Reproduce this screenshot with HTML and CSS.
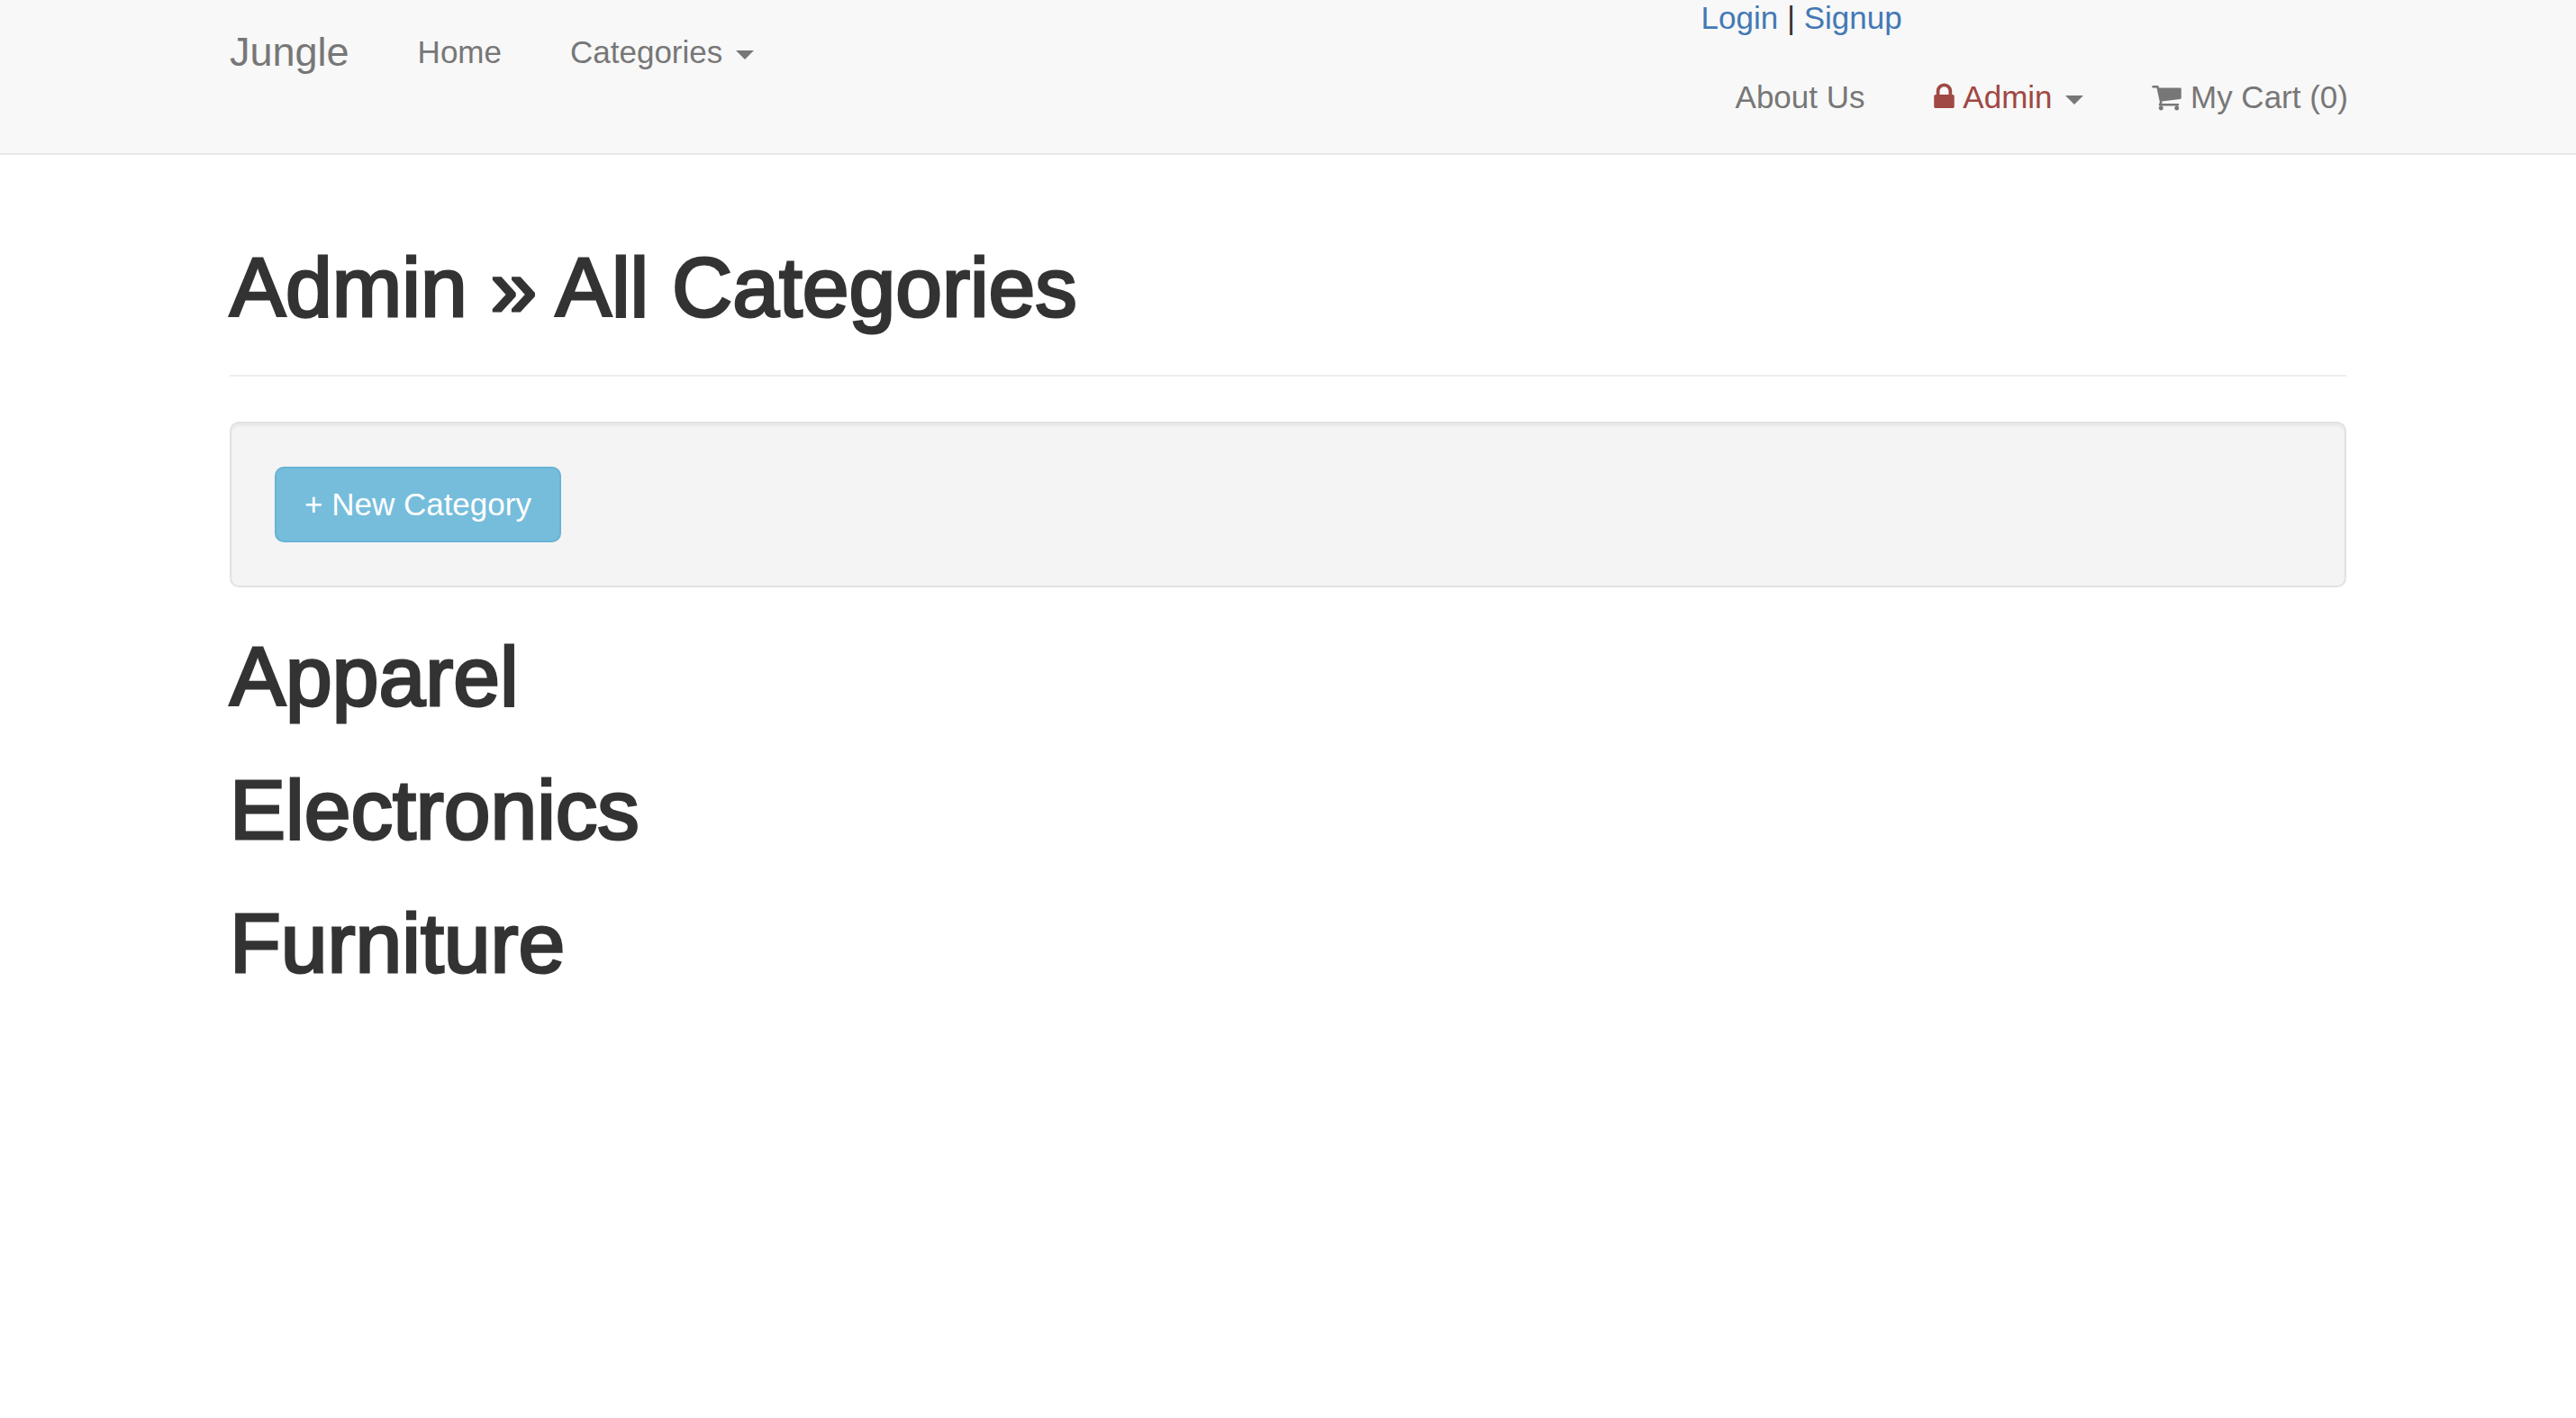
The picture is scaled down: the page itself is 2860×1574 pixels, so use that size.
FILE: index.html
```html
<!DOCTYPE html>
<html lang="en">
<head>
<meta charset="utf-8">
<meta name="viewport" content="width=device-width, initial-scale=1">
<title>Jungle</title>
<link rel="stylesheet" href="styles.css">
</head>
<body>
<header class="navbar">
  <div class="container navbar-inner">
    <nav class="nav nav-left" aria-label="Main">
      <a class="brand" href="#">Jungle</a>
      <a class="nav-link" href="#">Home</a>
      <button class="nav-link" type="button" aria-haspopup="true">Categories <span class="caret"></span></button>
    </nav>
    <div class="navbar-right">
      <div class="session"><a href="#">Login</a> | <a href="#">Signup</a></div>
      <nav class="nav nav-account" aria-label="Account">
        <a class="nav-link" href="#">About Us</a>
        <button class="nav-link" type="button" aria-haspopup="true"><span class="danger"><svg class="icon icon-lock" viewBox="0 -1536 1152 1792" aria-hidden="true"><path transform="scale(1,-1)" d="M320 768h512v192q0 106-75 181t-181 75-181-75-75-181v-192zM1152 672v-576q0-40-28-68t-68-28h-960q-40 0-68 28t-28 68v576q0 40 28 68t68 28h32v192q0 184 132 316t316 132 316-132 132-316v-192h32q40 0 68-28t28-68z"/></svg> Admin</span> <span class="caret"></span></button>
        <a class="nav-link" href="#"><svg class="icon icon-cart" viewBox="0 -1536 1664 1792" aria-hidden="true"><path transform="scale(1,-1)" d="M640 0q0-52-38-90t-90-38-90 38-38 90 38 90 90 38 90-38 38-90zM1536 0q0-52-38-90t-90-38-90 38-38 90 38 90 90 38 90-38 38-90zM1664 1088v-512q0-24-16.500-42.500t-40.500-21.500l-1044-122q13-60 13-70 0-16-24-64h920q26 0 45-19t19-45-19-45-45-19h-1024q-26 0-45 19t-19 45q0 11 8 31.500t16 36 21.500 40 15.500 29.500l-177 823h-204q-26 0-45 19t-19 45 19 45 45 19h256q16 0 28.500-6.500t19.500-15.500 13-24.500 8-26 5.500-29.500 4.500-26h1201q26 0 45-19t19-45z"/></svg> My Cart (0)</a>
      </nav>
    </div>
  </div>
</header>
<main class="container">
  <header class="page-header">
    <h1>Admin » All Categories</h1>
  </header>
  <div class="well">
    <a class="btn" href="#">+ New Category</a>
  </div>
  <section class="categories">
    <h1>Apparel</h1>
    <h1>Electronics</h1>
    <h1>Furniture</h1>
  </section>
</main>
</body>
</html>
```
FILE: styles.css
```css
* {
  box-sizing: border-box;
}

body {
  margin: 0;
  background: #fff;
  color: #333;
  font-family: "Helvetica Neue", "Liberation Sans", Arial, sans-serif;
  font-size: 35px;
  line-height: 50px;
}

a {
  color: #4479b5;
  text-decoration: none;
}

.container {
  max-width: 2426px;
  margin: 0 auto;
  padding: 0 38px;
}

.navbar {
  background: #f8f8f8;
  border-bottom: 2px solid #e7e7e7;
}

.navbar-inner {
  display: flex;
  justify-content: space-between;
  align-items: flex-start;
}

.nav {
  display: flex;
  align-items: center;
}

.nav-left {
  height: 116px;
  margin-left: -38px;
}

.nav-account {
  height: 130px;
  padding-top: 6px;
}

.navbar-right {
  margin-right: -40px;
}

.session {
  line-height: 40px;
}

.brand,
.nav-link {
  padding: 0 38px;
  border: 0;
  background: none;
  color: #777;
  font: inherit;
  white-space: nowrap;
}

.brand {
  font-size: 45px;
}

.danger {
  color: #9f4844;
}

.caret {
  display: inline-block;
  margin-left: 5px;
  vertical-align: middle;
  border-top: 10px solid;
  border-right: 10px solid transparent;
  border-left: 10px solid transparent;
}

.icon {
  height: 35px;
  vertical-align: -5px;
  fill: currentColor;
}

.icon-lock {
  width: 23px;
  margin-right: 2px;
}

.icon-cart {
  width: 33px;
}

h1 {
  margin: 0;
  font-size: 93px;
  font-weight: 400;
  line-height: 98px;
  -webkit-text-stroke: 3px currentColor;
}

.page-header {
  margin: 98px 0 50px;
  padding-bottom: 48px;
  border-bottom: 2px solid #eee;
}

.well {
  margin-bottom: 50px;
  padding: 48px;
  border: 2px solid #e2e2e2;
  border-radius: 10px;
  background: #f4f4f4;
  box-shadow: inset 0 3px 3px rgba(0, 0, 0, 0.05);
}

.btn {
  display: block;
  width: fit-content;
  padding: 15px 31px;
  border: 2px solid #67b3d5;
  border-radius: 10px;
  background: #76bddc;
  color: #fff;
}

.categories {
  display: flex;
  flex-direction: column;
  gap: 50px;
}
```
